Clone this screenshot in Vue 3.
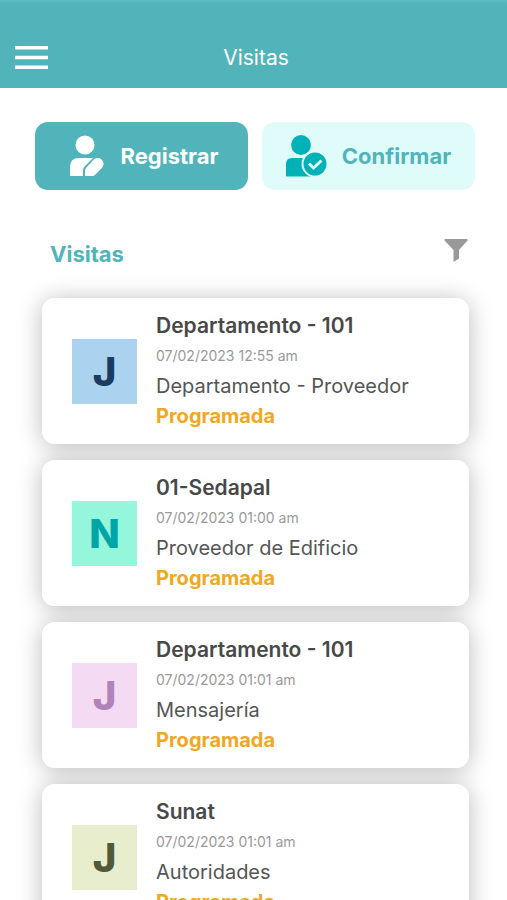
<script setup>
const visits = [
  { id: 1, initial: 'J', tone: 'blue', title: 'Departamento - 101', date: '07/02/2023 12:55 am', kind: 'Departamento - Proveedor', status: 'Programada' },
  { id: 2, initial: 'N', tone: 'mint', title: '01-Sedapal', date: '07/02/2023 01:00 am', kind: 'Proveedor de Edificio', status: 'Programada' },
  { id: 3, initial: 'J', tone: 'pink', title: 'Departamento - 101', date: '07/02/2023 01:01 am', kind: 'Mensajería', status: 'Programada' },
  { id: 4, initial: 'J', tone: 'olive', title: 'Sunat', date: '07/02/2023 01:01 am', kind: 'Autoridades', status: 'Programada' }
]
</script>

<template>
  <div class="screen">
    <header class="bar">
      <button class="icon-button" type="button" aria-label="Menú">
        <svg width="34" height="24" viewBox="0 0 34 24" aria-hidden="true">
          <path d="M0 1.700h33M0 11.500h33M0 21.200h33" stroke="#fff" stroke-width="3.400" />
        </svg>
      </button>
      <h1 class="bar-title">Visitas</h1>
    </header>

    <main class="content">
      <div class="actions">
        <button class="action primary" type="button">
          <svg width="42" height="44" viewBox="0 0 42 44" aria-hidden="true">
            <circle cx="20" cy="11" r="9.500" fill="currentColor" />
            <path d="M14 24H28L19.500 32.500Q18 34 18 36V42H5V33Q5 24 14 24Z" fill="currentColor" />
            <path d="M20 42V36.500Q20 35 21 34L28.500 25.800A5.900 5.900 0 0 1 37.400 33.500L30.500 40.500Q29 42 27 42Z" fill="currentColor" />
          </svg>
          <span>Registrar</span>
        </button>
        <button class="action secondary" type="button">
          <svg width="42" height="44" viewBox="0 0 42 44" aria-hidden="true">
            <circle cx="15" cy="11" r="9.900" fill="#00b2b8" />
            <path d="M6 24H23Q28 24 28 29V42.500H0V30Q0 24 6 24Z" fill="#00b2b8" />
            <circle cx="29" cy="30" r="12.500" fill="#00b2b8" stroke="#dffcfa" stroke-width="2" />
            <path d="M23 29.500L27.500 34L35.500 26.500" fill="none" stroke="#dffcfa" stroke-width="3" />
          </svg>
          <span>Confirmar</span>
        </button>
      </div>

      <div class="section-head">
        <h2 class="section-title">Visitas</h2>
        <button class="icon-button" type="button" aria-label="Filtrar">
          <svg width="24" height="24" viewBox="0 0 24 24" aria-hidden="true">
            <path d="M0.500 1H23.500V2.500L15 12V20.500L9.500 24V12L0.500 2.500Z" fill="#999" />
          </svg>
        </button>
      </div>

      <ul class="list">
        <li v-for="visit in visits" :key="visit.id" class="card">
          <div class="avatar" :class="visit.tone">{{ visit.initial }}</div>
          <div class="details">
            <h3 class="title">{{ visit.title }}</h3>
            <p class="date">{{ visit.date }}</p>
            <p class="kind">{{ visit.kind }}</p>
            <p class="status">{{ visit.status }}</p>
          </div>
        </li>
      </ul>
    </main>
  </div>
</template>

<style>
body {
  margin: 0;
  background: #fff;
}
</style>

<style scoped>
.screen {
  display: flex;
  flex-direction: column;
  height: 100vh;
  overflow: hidden;
  font-family: Inter, "Liberation Sans", sans-serif;
  color: #484848;
}
h1, h2, h3, p, ul {
  margin: 0;
  padding: 0;
}
.icon-button {
  display: flex;
  padding: 0;
  border: 0;
  background: none;
  cursor: pointer;
}
.bar {
  display: grid;
  grid-template-columns: 1fr auto 1fr;
  align-items: center;
  flex: none;
  padding: 28px 15px 0;
  height: 60px;
  background: linear-gradient(#5fbcc4, #50b4ba 4px);
}
.bar-title {
  padding-left: 5px;
  font-size: 21px;
  line-height: 24px;
  font-weight: 400;
  color: #fff;
}
.content {
  flex: 1;
  min-height: 0;
  overflow-y: auto;
  scrollbar-width: none;
  padding: 34px 0 20px;
}
.actions {
  display: grid;
  grid-template-columns: 1fr 1fr;
  gap: 14px;
  padding: 0 32px 0 35px;
}
.action {
  display: flex;
  align-items: center;
  justify-content: center;
  gap: 14px;
  height: 68px;
  padding: 0;
  border: 0;
  border-radius: 13px;
  font-family: inherit;
  font-size: 22px;
  font-weight: 700;
  cursor: pointer;
}
.primary {
  background: #50b4ba;
  color: #fff;
}
.secondary {
  background: #dffcfa;
  color: #50b4ba;
}
.section-head {
  display: flex;
  align-items: flex-start;
  justify-content: space-between;
  padding: 48px 39px 0 50px;
}
.section-title {
  font-size: 22px;
  line-height: 32px;
  font-weight: 700;
  color: #50b4ba;
}
.list {
  display: flex;
  flex-direction: column;
  gap: 16px;
  padding: 28px 38px 0 42px;
  list-style: none;
  isolation: isolate;
}
.card {
  position: relative;
  display: flex;
  align-items: center;
  gap: 19px;
  padding: 13px 30px;
  border-radius: 13px;
  background: #fff;
}
/* Shadows sit beneath every card so they never tint a neighbour. */
.card::before {
  content: "";
  position: absolute;
  inset: 0;
  z-index: -1;
  border-radius: inherit;
  box-shadow: 0 2px 24px rgba(0, 0, 0, 0.27);
}
.avatar {
  display: flex;
  align-items: center;
  justify-content: center;
  flex: none;
  width: 65px;
  height: 65px;
  font-size: 40px;
  font-weight: 800;
}
.blue { background: #abd2ef; color: #1b3c60; }
.mint { background: #94f6db; color: #00a5a8; }
.pink { background: #f4dbf3; color: #b084bb; }
.olive { background: #e8eecd; color: #505a39; }
.details {
  min-width: 0;
  line-height: 30px;
  font-size: 20px;
}
.title {
  font-size: 21px;
  font-weight: 600;
}
.date {
  font-size: 14px;
  color: #999;
}
.kind {
  color: #555;
}
.status {
  font-weight: 700;
  color: #f2a71e;
}
</style>
